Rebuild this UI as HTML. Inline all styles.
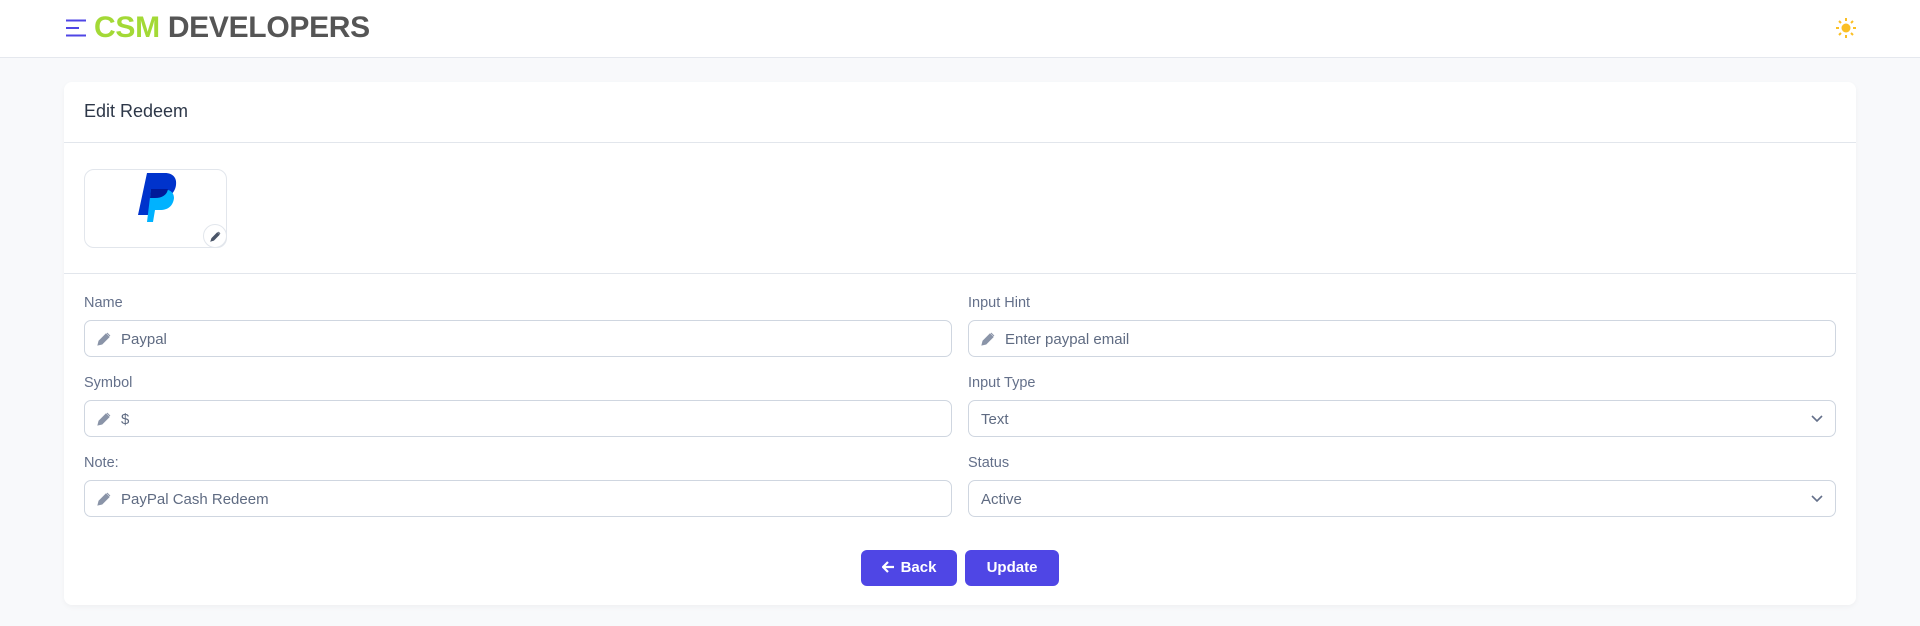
<!DOCTYPE html>
<html><head><style>
*{box-sizing:border-box;margin:0;padding:0}
body{width:1920px;height:626px;background:#f8f9fb;font-family:"Liberation Sans",sans-serif;position:relative;overflow:hidden}
.hdr{position:absolute;left:0;top:0;width:1920px;height:58px;background:#fff;border-bottom:1px solid #e5e8ee}
.logo{position:absolute;left:94px;top:11px;font-size:30px;font-weight:bold;letter-spacing:-0.3px}
.card{position:absolute;left:64px;top:82px;width:1792px;height:523px;background:#fff;border-radius:8px;box-shadow:0 2px 6px rgba(0,0,0,.04)}
.title{position:absolute;left:20px;top:19px;font-size:18px;color:#2d3748}
.hr{position:absolute;left:0;width:1792px;height:1px;background:#e2e6ec}
.img{position:absolute;left:20px;top:87px;width:143px;height:79px;border:1px solid #e2e6ec;border-radius:10px}
.lbl{position:absolute;font-size:14.5px;color:#64708a}
.inp{position:absolute;width:868px;height:37px;border:1px solid #cfd6e0;border-radius:7px;font-size:15px;color:#5f6b82;line-height:37px;padding-left:36px}
.inp.s{padding-left:12px}
.pen{position:absolute;left:12px;top:11px}
.chev{position:absolute;right:12px;top:14px}
.btn{position:absolute;top:468px;height:36px;background:#4f46e5;border-radius:6px;color:#fff;font-weight:bold;font-size:15px;line-height:36px;text-align:center}
</style></head><body>
<div class="hdr">
<svg style="position:absolute;left:66px;top:19px" width="20" height="18"><path d="M0 1.5H20M0 9H13M0 16.5H20" stroke="#4f46e5" stroke-width="2"/></svg>
<div class="logo"><span style="color:#a3d936">CSM</span> <span style="color:#555">DEVELOPERS</span></div>
<svg style="position:absolute;left:1836px;top:18px" width="20" height="20" viewBox="0 0 20 20"><circle cx="10" cy="10" r="4.5" fill="#fbbf24"/><g stroke="#fbbf24" stroke-width="2"><path d="M10 0v3M10 17v3M0 10h3M17 10h3M3 3l2 2M15 15l2 2M3 17l2-2M15 5l2-2"/></g></svg>
</div>
<div class="card">
<div class="title">Edit Redeem</div>
<div class="hr" style="top:60px"></div>
<div class="img">
<svg style="position:absolute;left:52px;top:3px" width="42" height="50" viewBox="0 0 42 50"><path d="M10 0h18c8 0 12 5 11 12-1 8-7 13-15 13h-7l-3 17H1z" fill="#0033cc"/><path d="M14 16h10c7 0 13 2 13 9-1 8-6 12-14 12h-5l-2 12H10z" fill="#00b2ff"/><path d="M14 16h17c-1 6-6 9-13 9h-5z" fill="#001a99"/></svg>
<div style="position:absolute;right:-1px;bottom:-1px;width:24px;height:24px;border:1px solid #e2e6ec;border-radius:50%;background:#fff"><svg style="position:absolute;left:6px;top:6px" width="11" height="11" viewBox="0 0 12 12"><path d="M1 11l1-3 6-6 2 2-6 6z M9 1l2 2" fill="#4a5568" stroke="#4a5568"/></svg></div>
</div>
<div class="hr" style="top:191px"></div>

<div class="lbl" style="left:20px;top:213px">Name</div>
<div class="inp" style="left:20px;top:238px"><svg class="pen" width="14" height="14" viewBox="0 0 14 14"><path d="M1 13l1-4 7-7 3 3-7 7z M10 1l3 3" fill="#8a94a8" stroke="#8a94a8"/></svg>Paypal</div>
<div class="lbl" style="left:904px;top:213px">Input Hint</div>
<div class="inp" style="left:904px;top:238px"><svg class="pen" width="14" height="14" viewBox="0 0 14 14"><path d="M1 13l1-4 7-7 3 3-7 7z M10 1l3 3" fill="#8a94a8" stroke="#8a94a8"/></svg>Enter paypal email</div>

<div class="lbl" style="left:20px;top:293px">Symbol</div>
<div class="inp" style="left:20px;top:318px"><svg class="pen" width="14" height="14" viewBox="0 0 14 14"><path d="M1 13l1-4 7-7 3 3-7 7z M10 1l3 3" fill="#8a94a8" stroke="#8a94a8"/></svg>$</div>
<div class="lbl" style="left:904px;top:293px">Input Type</div>
<div class="inp s" style="left:904px;top:318px">Text<svg class="chev" width="12" height="8"><path d="M1 1l5 5 5-5" fill="none" stroke="#64708a" stroke-width="1.6"/></svg></div>

<div class="lbl" style="left:20px;top:373px">Note:</div>
<div class="inp" style="left:20px;top:398px"><svg class="pen" width="14" height="14" viewBox="0 0 14 14"><path d="M1 13l1-4 7-7 3 3-7 7z M10 1l3 3" fill="#8a94a8" stroke="#8a94a8"/></svg>PayPal Cash Redeem</div>
<div class="lbl" style="left:904px;top:373px">Status</div>
<div class="inp s" style="left:904px;top:398px">Active<svg class="chev" width="12" height="8"><path d="M1 1l5 5 5-5" fill="none" stroke="#64708a" stroke-width="1.6"/></svg></div>

<div class="btn" style="left:797px;width:96px"><svg width="13" height="12" viewBox="0 0 13 12" style="vertical-align:-1px;margin-right:6px"><path d="M12 6H2M6 1L1 6l5 5" fill="none" stroke="#fff" stroke-width="2.2"/></svg>Back</div>
<div class="btn" style="left:901px;width:94px">Update</div>
</div>
</body></html>
